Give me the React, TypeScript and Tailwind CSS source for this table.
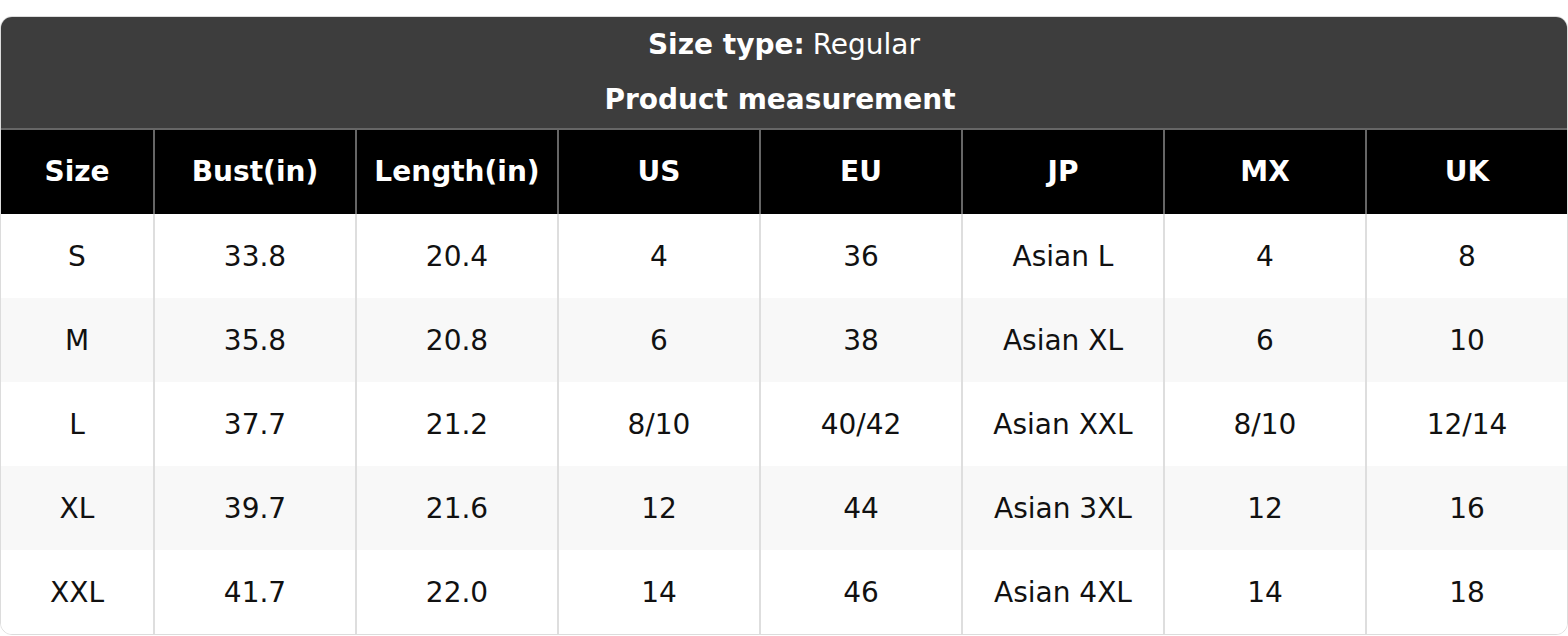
const COLUMNS = ["Size", "Bust(in)", "Length(in)", "US", "EU", "JP", "MX", "UK"];

const ROWS = [
  ["S", "33.8", "20.4", "4", "36", "Asian L", "4", "8"],
  ["M", "35.8", "20.8", "6", "38", "Asian XL", "6", "10"],
  ["L", "37.7", "21.2", "8/10", "40/42", "Asian XXL", "8/10", "12/14"],
  ["XL", "39.7", "21.6", "12", "44", "Asian 3XL", "12", "16"],
  ["XXL", "41.7", "22.0", "14", "46", "Asian 4XL", "14", "18"],
];

const App = () => {
  return (
    <div className="min-h-screen bg-white pt-4 font-['DejaVu_Sans',sans-serif]">
      <div className="overflow-hidden rounded-xl border border-[#dcdcdc]">
        {/* Title block */}
        <div className="bg-[#3d3d3d] text-[28px] text-white">
          <div className="flex h-[55px] items-center justify-center pt-[1px]">
            <span className="font-bold">Size type:</span>
            <span className="ml-2">Regular</span>
          </div>
          <div className="flex h-[56px] items-center justify-center pr-[8px] font-bold">
            Product measurement
          </div>
        </div>

        {/* Table */}
        <div className="grid grid-cols-[152px_repeat(7,1fr)] text-[28px]">
          {COLUMNS.map((col, i) => (
            <div
              key={col}
              className={`flex h-[86px] items-center justify-center border-t-2 border-[#666] bg-black font-bold text-white ${
                i > 0 ? "border-l-2" : ""
              }`}
            >
              {col}
            </div>
          ))}

          {ROWS.map((row, r) =>
            row.map((cell, i) => (
              <div
                key={`${r}-${i}`}
                className={`flex h-[84px] items-center justify-center pt-[2px] text-[#111] ${
                  r % 2 === 1 ? "bg-[#f8f8f8]" : "bg-white"
                } ${i > 0 ? "border-l-2 border-[#dedede]" : ""}`}
              >
                {cell}
              </div>
            ))
          )}
        </div>
      </div>
    </div>
  );
};

export default App;
